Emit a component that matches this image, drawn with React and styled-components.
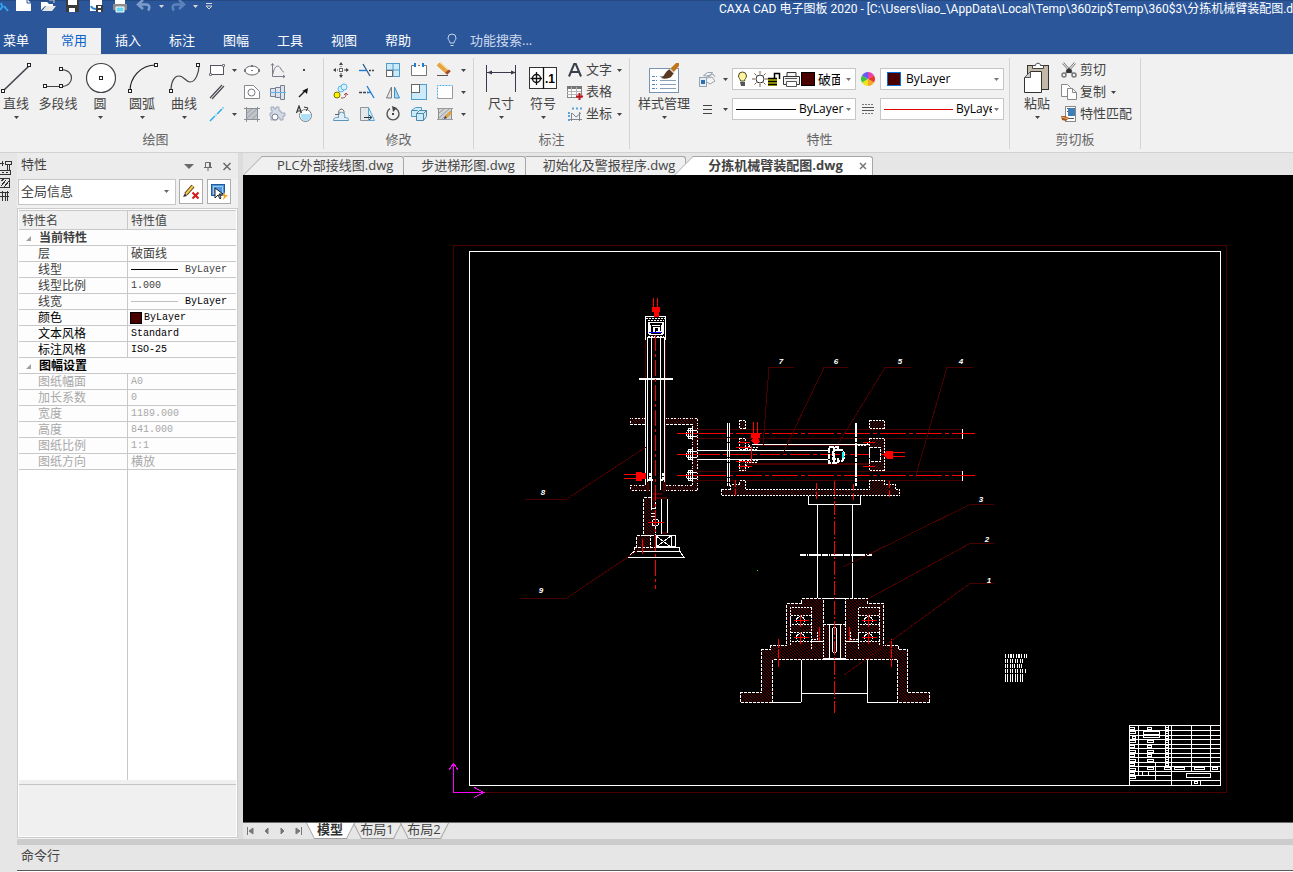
import React, { useState } from 'react'
import styled, { createGlobalStyle, css } from 'styled-components';

const GlobalStyle = createGlobalStyle`
  * {
    box-sizing: border-box;
  }

  body {
    margin: 0;
    overflow: hidden;
    background-color: #e6e6e6;
    color: #444444;
    font-family: 'Open Sans', 'Noto Sans CJK SC', sans-serif;
    font-size: 13px;
  }

  button, select, input {
    font: inherit;
    color: inherit;
    background: none;
    border: none;
    padding: 0;
    margin: 0;
  }

  svg {
    display: block;
    flex-shrink: 0;
  }
`;

const AppContainer = styled.div`
  height: 100vh;
  display: flex;
  flex-direction: column;
  overflow: hidden;
`;

const Svg = ({ w = 18, h = w, children, ...rest }) => (
  <svg width={w} height={h} viewBox={`0 0 ${w} ${h}`} fill="none" aria-hidden="true" {...rest}>{children}</svg>
);

const Caret = ({ color = '#444444' }) => (
  <Svg w={8} h={8}><path d="M2 3h5L4.500 6z" fill={color} /></Svg>
);

/* ---------- icons ---------- */

const Node = ({ x, y }) => <rect x={x - 1.5} y={y - 1.5} width="3" height="3" fill="#ffffff" stroke="#222222" />;

const bigIcons = {
  line: <Svg w={32} h={32}><path d="M3.500 28.500L29.500 3.500" stroke="#42424e" strokeWidth="1.600" /><Node x={3} y={29} /><Node x={29} y={3} /></Svg>,
  polyline: <Svg w={32} h={32}><path d="M3 24.500H19C33 24.500 33 7.500 19 7.500" stroke="#444444" strokeWidth="1.200" /><Node x={3} y={24} /><Node x={19} y={24} /><Node x={19} y={7} /></Svg>,
  circle: <Svg w={32} h={32}><circle cx="17" cy="16" r="14.500" fill="#ffffff" stroke="#42424a" strokeWidth="1.200" /><Node x={17} y={16} /></Svg>,
  arc: <Svg w={32} h={32}><path d="M4 29C4 16 14 3 30 3" stroke="#222222" strokeWidth="1.200" /><Node x={4} y={29} /><Node x={30} y={3} /></Svg>,
  curve: <Svg w={32} h={32}><path d="M3 29C3 20 6 14 11 14C16 14 18 20 22 20C28 20 31 10 31 3" stroke="#444444" strokeWidth="1.200" /><Node x={3} y={29} /><Node x={30} y={3} /></Svg>,
  dimension: <Svg w={32} h={32}><path d="M1.500 3V30M30.500 3V30M2 10.500H30" stroke="#3a3a4a" /><path d="M2 10.500l5-2v4zM31 10.500l-5-2v4z" fill="#3a3a4a" /></Svg>,
  symbol: (
    <Svg w={32} h={32}>
      <rect x="2.500" y="5.500" width="27" height="21" fill="#ffffff" stroke="#333333" />
      <path d="M16.500 5V27M9.500 10V23M3.500 16.500H15" stroke="#111111" strokeWidth="1.300" />
      <circle cx="9.500" cy="16.500" r="4" stroke="#111111" strokeWidth="1.400" />
      <text x="18" y="21" fontSize="12" fontWeight="700" fill="#000000" fontFamily="Liberation Sans, sans-serif">.1</text>
    </Svg>
  ),
  styles: (
    <Svg w={32} h={32}>
      <rect x="1.500" y="6.500" width="29" height="24" fill="#ffffff" stroke="#7795b0" />
      <path d="M4 14.500h5M4 18.500h5M4 22.500h5M4 26.500h5" stroke="#5887c9" strokeDasharray="3 1" />
      <path d="M12 14.500h4M12 18.500h16M12 22.500h16M12 26.500h16" stroke="#8aa0b4" />
      <path d="M22 7l6-6h3v3l-6 7z" fill="#c07820" />
      <path d="M22 7l4 4-3 4c-3 2-7 2-10 1 4-2 4-7 9-9z" fill="#5a3a22" />
      <path d="M22 7l4 4" stroke="#dddddd" strokeWidth="1.500" />
    </Svg>
  ),
  paste: (
    <Svg w={32} h={32}>
      <rect x="6.500" y="3.500" width="21" height="24" fill="#c4b8a6" stroke="#333333" />
      <path d="M11.500 6.500v-3h3c0-3 5-3 5 0h3v3z" fill="#ffffff" stroke="#444444" />
      <path d="M9.500 9.500h11v21h-17v-15z" fill="#ffffff" stroke="#333333" />
      <path d="M9.500 9.500v6h-6z" fill="#cccccc" stroke="#555555" />
    </Svg>
  ),
};

const icons = {
  rect: <Svg><rect x="2.500" y="4.500" width="13" height="9" fill="#ffffff" stroke="#55555f" /><path d="M1.500 12.500h2v2h-2zM14.500 3.500h2v2h-2z" fill="#ffffff" stroke="#77777f" /></Svg>,
  ellipse: <Svg><ellipse cx="9" cy="9.500" rx="7" ry="4.500" fill="#ffffff" stroke="#66666f" /><path d="M1 8h2v3H1zM15 8h2v3h-2zM8 4h2v2H8zM8 9h2v1H8z" fill="#77777f" /></Svg>,
  plotCurve: <Svg><path d="M3.500 3v12.500H16M2 4.500l1.500-2 1.500 2M14 14l2 1.500-2 1.500M4 13C5 6 9 2 12 8c1 2 2 3 3 3" stroke="#7d7d88" /></Svg>,
  dot: <Svg><rect x="8" y="8" width="2" height="2" fill="#444444" /></Svg>,
  parallel: <Svg><path d="M2 15L14 2M4 16L16 3" stroke="#4a4a55" strokeWidth="1.200" /></Svg>,
  polygon: <Svg><path d="M1.500 2.500h9l6 6v7h-15z" fill="#ffffff" stroke="#88888f" /><circle cx="8.500" cy="9.500" r="3.500" stroke="#77777f" /></Svg>,
  shaft: <Svg><path d="M1.500 5.500h5v-1h5v-2h4v14h-4v-2h-5v-1h-5z" fill="#dce3ec" stroke="#77808f" /><path d="M6.500 5v9M11.500 3v13" stroke="#77808f" /><path d="M1 9.500h16" stroke="#5ab4f0" /></Svg>,
  arrow: <Svg><path d="M4 14L11 7" stroke="#222222" strokeWidth="1.500" /><path d="M13 5l-1 6-2-2-3-1z" fill="#111111" /></Svg>,
  centerLine: <Svg><path d="M2 16L16 2" stroke="#25aae8" strokeWidth="1.400" strokeDasharray="7 1 1 1" /></Svg>,
  hatch: <Svg><rect x="3" y="3" width="12" height="12" fill="#c0c4c8" /><path d="M3 9l6-5M3 14L14 4M8 15l7-6" stroke="#9a9ea4" /><path d="M1 3.500h16M1 14.500h16M3.500 2v15M14.500 2v15" stroke="#8a8e96" /></Svg>,
  gear: <Svg><path d="M2 2h3v2h2V2h3v4h2v2h4v3h-2v4h-3v-2H8v2H2v-4H1V8h2V5H2z" fill="#d4dae6" stroke="#a0a9ba" /><circle cx="6" cy="12" r="3" fill="#ffffff" stroke="#77808f" /></Svg>,
  block: <Svg><circle cx="10.500" cy="10.500" r="6" fill="#ffffff" stroke="#777f8a" /><path d="M6 9h10c0 9-10 9-10 2z" fill="#aee0fa" /><path d="M1.500 8L4 1l2.500 7M2 6h4" stroke="#333333" strokeWidth="1.200" /><path d="M9 2l4 1-2 3" stroke="#333333" /></Svg>,
  move: <Svg><path d="M9 2v4M9 12v4M2 9h4M12 9h4" stroke="#444444" strokeDasharray="2 1" /><path d="M7 4l2-3 2 3zM7 14l2 3 2-3zM4 7L1 9l3 2zM14 7l3 2-3 2z" fill="#444444" /><rect x="7.500" y="7.500" width="3" height="3" fill="#ffffff" stroke="#666666" /></Svg>,
  trim: <Svg><path d="M1 9.500h7" stroke="#1c7cd6" strokeWidth="1.400" /><path d="M11 9.500h6" stroke="#444444" strokeWidth="1.400" strokeDasharray="2 1" /><path d="M5 3l7 12" stroke="#2c5c96" strokeWidth="1.300" /></Svg>,
  array: <Svg><rect x="2.500" y="2.500" width="13" height="13" fill="#cdeafa" stroke="#4f9cc8" /><path d="M9 2v14M2 9h14" stroke="#4f9cc8" /><rect x="2.500" y="9.500" width="6" height="6" fill="#ffffff" stroke="#666666" /></Svg>,
  fracture: <Svg><path d="M5 4.500H1.500v10h15v-10H13M8 4.500h2" fill="#ffffff" stroke="#777777" /><path d="M5 2v4M13 2v4" stroke="#1c7cd6" strokeWidth="2" /></Svg>,
  erase: <Svg><path d="M2 3l10 9" stroke="#e8a33d" strokeWidth="4" /><path d="M11 10l2 2" stroke="#9b4b32" strokeWidth="5" /><path d="M4 1l9 8" stroke="#fbd38a" /><path d="M1 14.500h11" stroke="#555555" /></Svg>,
  copyMove: <Svg><circle cx="5" cy="12" r="3" fill="#fff200" stroke="#777700" /><circle cx="9" cy="6" r="3" stroke="#59b4e8" fill="#d8f0fc" /><circle cx="12" cy="4" r="3" stroke="#59b4e8" fill="#d8f0fc" /><path d="M9 15c4 0 5-1 5-4M12 12l2-2 2 2" stroke="#9b4b4b" /></Svg>,
  extend: <Svg><path d="M1 9.500h9" stroke="#444444" strokeWidth="1.400" strokeDasharray="3 1" /><path d="M9 3l7 12" stroke="#1c7cd6" strokeWidth="1.300" /><path d="M9 9.500h4" stroke="#1c7cd6" strokeWidth="1.400" /></Svg>,
  mirror: <Svg><path d="M7.500 4v11h-5z" fill="#e8e8e8" stroke="#777777" /><path d="M10.500 4v11h5z" fill="#a9daf5" stroke="#3f8fbf" /></Svg>,
  scale: <Svg><rect x="1.500" y="1.500" width="15" height="15" fill="#cdeafa" stroke="#4f9cc8" /><rect x="1.500" y="1.500" width="8" height="8" fill="#ffffff" stroke="#666666" /></Svg>,
  stretch: <Svg><path d="M1.500 2.500h15v13h-15z" fill="#ffffff" stroke="#999999" /><path d="M1.500 15.500v-13h15" stroke="#ffffff" /><path d="M1.500 15.500v-13h15" stroke="#4aa8e0" strokeDasharray="2 1" /></Svg>,
  offset: <Svg><path d="M1.500 15.500h15c0-3-2-3-4-3 2-7-8-7-6 0-3 0-5 0-5 3z" stroke="#5c93b8" fill="#dceefa" /><path d="M3 9.500h4c-2-7 6-7 5-1" stroke="#666666" /></Svg>,
  chamfer: <Svg><path d="M2.500 2.500h8v13h-8z" fill="#e4e8ea" stroke="#8c96a0" /><path d="M10.500 2.500l6 13h-6z" fill="#d8f0fc" stroke="#5fa8d0" /><path d="M6 12.500h7M11 10l3 2.500-3 2.500" stroke="#333333" /></Svg>,
  rotate: <Svg><path d="M6 3.700A6 6 0 1 0 12 3.700" stroke="#555555" strokeWidth="1.400" /><path d="M8 1l5 2-4 4z" fill="#444444" /><rect x="8" y="8" width="2" height="2" fill="#444444" /></Svg>,
  explode: <Svg><path d="M1.500 5.500l4-3h6v6l-3 3h-7z" fill="#cdeafa" stroke="#4f9cc8" /><path d="M6.500 8.500l3-3h7v6l-3 4h-7z" fill="#cdeafa" stroke="#4f87a8" /><path d="M6.500 8.500h7v7M13.500 8.500l3-3M1.500 5.500h6" stroke="#4f87a8" /></Svg>,
  editHatch: <Svg><rect x="2.500" y="3.500" width="13" height="11" fill="#d0d3d6" stroke="#8c8c8c" /><path d="M3 8l5-4M3 13L13 4M5 15L15 6M1 3.500h16M1 14.500h16" stroke="#9a9a9a" /><path d="M10 12l5-5" stroke="#e0a040" strokeWidth="3" /><path d="M8 14l1-3 2 2z" fill="#333333" /></Svg>,
  text: <Svg><path d="M3 15.500L8.200 3h1.600L15 15.500M5 11h8" stroke="#3b3f4a" strokeWidth="2" /></Svg>,
  table: <Svg><rect x="1.500" y="3.500" width="14" height="11" fill="#ffffff" stroke="#888888" /><path d="M1 4.500h15" stroke="#777777" strokeWidth="3" /><path d="M1 8.500h14M1 11.500h14M5.500 4v10M10.500 4v10" stroke="#b4b4b4" /><path d="M13.500 10v7M10 13.500h7" stroke="#c4151c" strokeWidth="2" /></Svg>,
  coord: <Svg><path d="M5.500 16V8M4 14.500h12M13.500 16V7M6 8l4 4 5-4" stroke="#7c8590" /><path d="M6 3.500h2M10 3.500h2M14 3.500h2M3 7v2M3 10v2M3 14v2" stroke="#5aa4dc" strokeWidth="2" /></Svg>,
  layers: <Svg><path d="M5.500 5.500l4-3h5l-3 4zM4 9l10-2 3 4-5 3z" fill="#f4f4f4" stroke="#98a4b0" /><path d="M9 6l6-2 2 3" stroke="#98a4b0" /><rect x="1.500" y="7.500" width="7" height="9" fill="#e4edf6" stroke="#98a4b0" /><rect x="3" y="10" width="4" height="4" fill="#2e6fae" /></Svg>,
  lineWeights: <Svg><path d="M5 5.500h9M5 9.500h9M5 13.500h9" stroke="#444444" strokeWidth="1.200" /></Svg>,
  lineTypes: <Svg w={14} h={14}><path d="M1 2.500h12M1 11.500h12" stroke="#777777" strokeDasharray="2 1" /><path d="M1 5.500h12M1 8.500h12" stroke="#555555" /></Svg>,
  colors: (
    <Svg w={14} h={14}>
      <path d="M7 7L7 0A7 7 0 0 1 13 3.500z" fill="#e83fae" />
      <path d="M7 7L13 3.500A7 7 0 0 1 13 10.500z" fill="#e8372c" />
      <path d="M7 7L13 10.500A7 7 0 0 1 7 14z" fill="#f5a623" />
      <path d="M7 7V14A7 7 0 0 1 1 10.500z" fill="#efe21c" />
      <path d="M7 7L1 10.500A7 7 0 0 1 1 3.500z" fill="#3cc43c" />
      <path d="M7 7L1 3.500A7 7 0 0 1 7 0z" fill="#6a5af0" />
    </Svg>
  ),
  cut: <Svg><path d="M3 2l9 10M15 2L6 12" stroke="#777777" strokeWidth="2.500" /><path d="M3 2l8 9M15 2L7 11" stroke="#ffffff" /><path d="M6 9l3-2 3 2-1 3H7z" fill="#333333" /><circle cx="4" cy="14" r="2" stroke="#777777" strokeWidth="1.500" /><circle cx="14" cy="14" r="2" stroke="#777777" strokeWidth="1.500" /></Svg>,
  copy: <Svg><path d="M1.500 1.500h6l3 3v9h-9z" fill="#ffffff" stroke="#888888" /><path d="M7.500 5.500h5l4 4v7h-9z" fill="#ffffff" stroke="#888888" /><path d="M12.500 5.500v4h4" stroke="#888888" /></Svg>,
  match: <Svg><rect x="5.500" y="1.500" width="10" height="15" fill="#ffffff" stroke="#888888" /><rect x="8" y="3" width="7" height="8" fill="#3f7fb8" /><path d="M7 3.500h1M7 6.500h1M8 13.500h6" stroke="#555555" /><path d="M1 11l4 0 4 2-3 3-4-1z" fill="#a85a1c" /><path d="M2 12l6 2" stroke="#e8b070" /></Svg>,
};

/* ---------- title bar ---------- */

const TitleBar = styled.header`
  background-color: #2b579a;
  color: #ffffff;
`;

const TitleRow = styled.div`
  height: 28px;
  display: flex;
  align-items: flex-start;
  justify-content: space-between;
  border-top: 1px solid #254a83;
`;

const QuickAccess = styled.div`
  display: flex;
  align-items: center;
  flex-shrink: 0;
  height: 10px;
  width: 719px;

  button {
    width: 24px;
    height: 16px;
    display: flex;
    justify-content: center;
    align-items: center;
    flex-shrink: 0;
  }

  .narrow {
    width: 10px;
  }

  .logo {
    width: 12px;
    justify-content: flex-start;
  }

  button:last-child {
    margin-left: 4px;
  }
`;

const Title = styled.div`
  flex: 1;
  min-width: 0;
  font-family: Roboto, 'Noto Sans CJK SC', sans-serif;
  font-size: 12px;
  line-height: 16px;
  white-space: nowrap;
`;

const MenuTabs = styled.nav`
  display: flex;
  height: 26px;
  align-items: stretch;
`;

const MenuTab = styled.button`
  display: flex;
  justify-content: center;
  width: ${props => props.$first ? '47px' : '54px'};
  padding-right: ${props => props.$first ? '15px' : '0'};
  line-height: 24px;
  color: ${props => props.$active ? '#0a64c8' : '#ffffff'};
  background-color: ${props => props.$active ? '#f1f1f1' : 'transparent'};
  white-space: nowrap;
`;

const FeatureSearch = styled.label`
  display: flex;
  align-items: center;
  gap: 11px;
  padding: 0 0 2px 20px;
  color: #dfe8f5;

  input {
    width: 120px;
  }

  input::placeholder {
    color: #cddaee;
    opacity: 1;
  }
`;

const quickIcons = [
  { name: '应用', cls: 'logo', icon: <Svg w={12} h={16}><path d="M0 12l3-4M1 5l1 3M4 8l4 5" stroke="#35a4f4" strokeWidth="2" /></Svg> },
  { name: '新建', icon: <Svg w={18} h={16}><path d="M1 1h11l4 4v8H1z" fill="#ffffff" /><path d="M12 1v4h4" stroke="#2b579a" /></Svg> },
  { name: '打开', icon: <Svg w={18} h={16}><path d="M2 12V4h6l2 2h4v2H6z" fill="#ffffff" /><path d="M7 8h10l-4 5H3z" fill="#e6e6e6" /><path d="M10 2h5v3" stroke="#cccccc" /></Svg> },
  { name: '保存', icon: <Svg w={18} h={16}><path d="M3 1h13v13H3z" fill="#3b3b3b" /><path d="M5 1h9v6H5zM6 10h6v4H6z" fill="#ffffff" /></Svg> },
  { name: '另存为', icon: <Svg w={18} h={16}><path d="M3 1h12v12H3z" fill="#ffffff" /><path d="M4 8c1 3 3 3 5 3" stroke="#2b87d1" strokeWidth="2" /><path d="M9 7h7v7H9z" fill="#3b3b3b" /><path d="M11 8h3v2h-3zM11 12h3v2h-3z" fill="#ffffff" /></Svg> },
  { name: '打印', icon: <Svg w={18} h={16}><path d="M4 0h10v6H4z" fill="#ffffff" /><path d="M2 6h14v6H2z" fill="#8c8c8c" /><path d="M5 9h8v5H5z" fill="#64d7f4" stroke="#ffffff" /></Svg> },
  { name: '撤销', icon: <Svg w={16} h={16}><path d="M7 2L2 6.500 7 11M3 6.500h7c4 0 4 4 2 6" stroke="#7d9ccb" strokeWidth="2.500" /></Svg> },
  { name: '撤销列表', cls: 'narrow', icon: <Caret color="#d8d8d8" /> },
  { name: '恢复', icon: <Svg w={16} h={16}><path d="M9 2l5 4.500L9 11M13 6.500H6c-4 0-4 4-2 6" stroke="#5d82bb" strokeWidth="2.500" /></Svg> },
  { name: '恢复列表', cls: 'narrow', icon: <Caret color="#d8d8d8" /> },
  { name: '自定义', cls: 'narrow', icon: <Svg w={8} h={12}><path d="M1 3.500h6" stroke="#d8d8d8" /><path d="M1 6h6L4 9z" stroke="#d8d8d8" /></Svg> },
];

const menuTabs = ['菜单', '常用', '插入', '标注', '图幅', '工具', '视图', '帮助'];

const Header = () => {

  const [activeTab, setActiveTab] = useState('常用');

  return (
    <TitleBar>
      <TitleRow>
        <QuickAccess>
          {quickIcons.map(item => <button key={item.name} className={item.cls} aria-label={item.name}>{item.icon}</button>)}
        </QuickAccess>
        <Title>CAXA CAD 电子图板 2020 - [C:\Users\liao_\AppData\Local\Temp\360zip$Temp\360$3\分拣机械臂装配图.dwg]</Title>
      </TitleRow>
      <MenuTabs>
        {menuTabs.map((name, index) => (
          <MenuTab key={name} $first={index === 0} $active={name === activeTab} onClick={() => setActiveTab(name)}>{name}</MenuTab>
        ))}
        <FeatureSearch>
          <Svg w={14} h={14}><path d="M5 10c0-2-2-3-2-5a4 4 0 0 1 8 0c0 2-2 3-2 5zM5.500 12.500h3" stroke="#c8d6ec" /></Svg>
          <input placeholder="功能搜索..." aria-label="功能搜索" />
        </FeatureSearch>
      </MenuTabs>
    </TitleBar>
  );
};

/* ---------- ribbon ---------- */

const RibbonContainer = styled.div`
  display: flex;
  flex-shrink: 0;
  padding: 3px 0;
  background-color: #f1f1f1;
  border-top: 1px solid #e1e1e1;
  border-bottom: 1px solid #d2d2d2;
  overflow: hidden;
`;

const Group = styled.section`
  display: flex;
  flex-direction: column;
  flex-shrink: 0;
  width: ${props => props.$width}px;
  padding: 1px 0;
  border-right: 1px solid #d4d4d4;

  &:first-child {
    margin-left: -12px;
  }
`;

const GroupContent = styled.div`
  display: flex;
  height: 66px;
  padding-left: ${props => props.$indent}px;
`;

const GroupLabel = styled.div`
  margin-top: 5px;
  line-height: 18px;
  text-align: center;
  color: #666666;
`;

const BigButtonBox = styled.button`
  width: ${props => props.$width || 42}px;
  flex-shrink: 0;
  display: flex;
  flex-direction: column;
  align-items: center;
  padding-top: 3px;
  line-height: 18px;
  white-space: nowrap;

  svg:last-child {
    margin-top: 1px;
  }
`;

const BigButton = ({ label, icon, width, caret = true }) => (
  <BigButtonBox $width={width}>
    {bigIcons[icon]}
    <span>{label}</span>
    {caret && <Caret />}
  </BigButtonBox>
);

const IconGrid = styled.div`
  display: grid;
  grid-template-columns: ${props => props.$columns};
  grid-auto-rows: 22px;
`;

const IconButton = styled.button`
  display: flex;
  align-items: center;
  justify-content: center;
`;

const TextButton = styled.button`
  height: 22px;
  display: flex;
  align-items: center;
  gap: 2px;
  line-height: 20px;
  white-space: nowrap;

  span {
    height: 22px;
  }

  svg:last-child {
    margin-left: 1px;
  }
`;

const Stack = styled.div`
  display: flex;
  flex-direction: column;
  padding-left: ${props => props.$indent || 0}px;
`;

const PropertyGrid = styled.div`
  display: grid;
  grid-template-columns: 22px 14px 124px 24px 124px;
  grid-auto-rows: 30px;
  align-items: center;
  justify-items: center;
  padding-top: 5px;
`;

const Combo = styled.div`
  width: 100%;
  height: 22px;
  display: flex;
  align-items: center;
  padding: 0 3px;
  background-color: #ffffff;
  border: 1px solid #c6c6c6;
  color: #000000;

  select {
    flex: 1;
    min-width: 0;
    height: 18px;
    margin-right: ${props => props.$small ? '0' : '4px'};
    line-height: 18px;
    appearance: none;
    outline: none;
    overflow: hidden;
    font-size: ${props => props.$small ? '12px' : '13px'};
  }
`;

const Swatch = styled.span`
  width: 14px;
  height: 14px;
  flex-shrink: 0;
  background-color: #4b0000;
  border: 1px solid ${props => props.$border || '#000000'};
  margin-left: ${props => props.$before || 0}px;
  margin-right: ${props => props.$gap || 0}px;
`;

const LineSample = styled.span`
  width: ${props => props.$width}px;
  flex-shrink: 0;
  margin-right: 3px;
  border-top: 1px solid ${props => props.$color};
`;

const layerIcons = (
  <Svg w={65} h={18}>
    <path d="M4.500 11c0-2-2-3-2-5a4 4 0 0 1 8 0c0 2-2 3-2 5z" fill="#fff3a0" stroke="#4a4a20" /><path d="M4 12h5v4H5z" fill="#555555" />
    <circle cx="24" cy="9" r="4" fill="#ffffff" stroke="#333333" />
    <path d="M24 1v3M24 14v3M16 9h3M29 9h3M18.500 3.500l2 2M27.500 12.500l2 2M29.500 3.500l-2 2M20.500 12.500l-2 2" stroke="#7a5a3a" />
    <path d="M32 8h9v8h-9z" fill="#b8b800" /><path d="M32 8.500h9M32 11.500h9M32 14.500h9M38.500 8V3.500h5V9" stroke="#000000" strokeWidth="1.500" />
    <path d="M51 6V2.500h9V6M47.500 6.500h16v8h-16z" fill="#f4f4f4" stroke="#333333" /><path d="M50.500 11.500h10v5h-10zM49 8.500h12" fill="#ffffff" stroke="#555555" />
  </Svg>
);

const drawTools = ['rect', 'caret', 'ellipse', 'plotCurve', 'dot', 'parallel', null, 'polygon', 'shaft', 'arrow', 'centerLine', 'caret', 'hatch', 'gear', 'block'];
const editTools = ['move', 'trim', 'array', 'fracture', 'erase', 'caret', 'copyMove', 'extend', 'mirror', 'scale', 'stretch', 'caret', 'offset', 'chamfer', 'rotate', 'explode', 'editHatch', 'caret'];

const ToolGrid = ({ tools, columns }) => (
  <IconGrid $columns={columns}>
    {tools.map((tool, index) => tool
      ? <IconButton key={index} aria-label={tool}>{tool === 'caret' ? <Caret /> : icons[tool]}</IconButton>
      : <span key={index} />)}
  </IconGrid>
);

const Ribbon = () => (
  <RibbonContainer>
    <Group $width={336}>
      <GroupContent $indent={7}>
        <BigButton label="直线" icon="line" />
        <BigButton label="多段线" icon="polyline" caret={false} />
        <BigButton label="圆" icon="circle" />
        <BigButton label="圆弧" icon="arc" />
        <BigButton label="曲线" icon="curve" />
        <ToolGrid tools={drawTools} columns="24px 10px 26px 26px 26px" />
      </GroupContent>
      <GroupLabel>绘图</GroupLabel>
    </Group>
    <Group $width={150}>
      <GroupContent $indent={4}>
        <ToolGrid tools={editTools} columns="repeat(5, 26px) 10px" />
      </GroupContent>
      <GroupLabel>修改</GroupLabel>
    </Group>
    <Group $width={156}>
      <GroupContent $indent={6}>
        <BigButton label="尺寸" icon="dimension" />
        <BigButton label="符号" icon="symbol" />
        <Stack $indent={2}>
          <TextButton>{icons.text}<span>文字</span><Caret /></TextButton>
          <TextButton>{icons.table}<span>表格</span></TextButton>
          <TextButton>{icons.coord}<span>坐标</span><Caret /></TextButton>
        </Stack>
      </GroupContent>
      <GroupLabel>标注</GroupLabel>
    </Group>
    <Group $width={380}>
      <GroupContent $indent={2}>
        <BigButton label="样式管理" icon="styles" width={64} />
        <PropertyGrid>
          <IconButton aria-label="图层">{icons.layers}</IconButton>
          <IconButton aria-label="图层列表"><Caret /></IconButton>
          <Combo>
            {layerIcons}
            <Swatch $gap={3} />
            <select aria-label="当前图层"><option>破面线</option></select>
            <Caret color="#777777" />
          </Combo>
          {icons.colors}
          <Combo $small>
            <Swatch $border="#0a6fd8" $before={3} $gap={5} />
            <select aria-label="颜色"><option>ByLayer</option></select>
            <Caret color="#777777" />
          </Combo>
          <IconButton aria-label="线宽设置">{icons.lineWeights}</IconButton>
          <IconButton aria-label="线宽列表"><Caret /></IconButton>
          <Combo $small>
            <LineSample $width={60} $color="#000000" />
            <select aria-label="线宽"><option>ByLayer</option></select>
            <Caret color="#777777" />
          </Combo>
          {icons.lineTypes}
          <Combo $small>
            <LineSample $width={69} $color="#e00000" />
            <select aria-label="线型"><option>ByLayer</option></select>
            <Caret color="#777777" />
          </Combo>
        </PropertyGrid>
      </GroupContent>
      <GroupLabel>特性</GroupLabel>
    </Group>
    <Group $width={131}>
      <GroupContent $indent={6}>
        <BigButton label="粘贴" icon="paste" />
        <Stack $indent={2}>
          <TextButton>{icons.cut}<span>剪切</span></TextButton>
          <TextButton>{icons.copy}<span>复制</span><Caret /></TextButton>
          <TextButton>{icons.match}<span>特性匹配</span></TextButton>
        </Stack>
      </GroupContent>
      <GroupLabel>剪切板</GroupLabel>
    </Group>
  </RibbonContainer>
);

/* ---------- property panel ---------- */

const Workspace = styled.main`
  flex: 1;
  min-height: 0;
  display: flex;
`;

const SideStrip = styled.div`
  width: 17px;
  flex-shrink: 0;
  padding-top: 6px;
`;

const Panel = styled.aside`
  width: 221px;
  flex-shrink: 0;
  display: flex;
  flex-direction: column;
  background-color: #f0f0f0;
`;

const Splitter = styled.div`
  width: 5px;
  flex-shrink: 0;
  background-color: #dcdcdc;
`;

const PanelTitle = styled.div`
  height: 26px;
  display: flex;
  align-items: center;
  padding: 0 2px 5px 4px;
  background-color: #ececec;

  span {
    flex: 1;
  }

  button {
    width: 19px;
    height: 16px;
    display: flex;
    align-items: flex-end;
    justify-content: center;
  }
`;

const PanelTools = styled.div`
  display: flex;
  gap: 3px;
  padding: 0 7px 3px 1px;

  button {
    width: 24px;
    height: 25px;
    flex-shrink: 0;
    display: flex;
    align-items: center;
    justify-content: center;
    background-color: #ffffff;
    border: 1px solid #acacac;
  }

  button:last-child {
    margin-left: 1px;
  }
`;

const ScopeCombo = styled(Combo)`
  flex: 1;
  width: auto;
  height: 26px;
  padding: 0 5px 2px 2px;
  color: #444444;
`;

const PropertyBox = styled.div`
  flex: 1;
  min-height: 0;
  margin: 0 0 1px;
  padding: 1px;
  display: flex;
  flex-direction: column;
  background-color: #ffffff;
  border: 1px solid #cccccc;
  font-family: 'Noto Sans CJK SC', sans-serif;
  font-size: 12px;
`;

const PropertyTable = styled.table`
  width: 100%;
  table-layout: fixed;
  border-spacing: 0;
  background-color: #fdfdfd;

  col:first-child {
    width: 109px;
  }

  th {
    height: 20px;
    padding: 0 3px;
    line-height: 17px;
    font-weight: 400;
    text-align: left;
    vertical-align: top;
    background-color: #f0f0f0;
    border: 1px solid #c8c8c8;
    border-width: 1px 1px 1px 0;
  }

  th:last-child {
    border-right: none;
  }
`;

const toneColors = { gray: '#404040', black: '#000000', disabled: '#a8a8a8' };

const PropertyRow = styled.tr`
  color: ${props => toneColors[props.$tone]};

  td {
    height: 16px;
    padding: 0 3px;
    line-height: 13px;
    vertical-align: top;
    border-bottom: 1px solid #c8c8c8;
    white-space: nowrap;
  }

  td:first-child:not([colspan]) {
    padding-left: 19px;
    border-right: 1px solid #c8c8c8;
  }
`;

const GroupCell = styled.td`
  font-weight: 700;

  div {
    display: flex;
    align-items: center;
    gap: 7px;
  }
`;

const Value = styled.div`
  height: 13px;
  display: flex;
  align-items: center;
  gap: 4px;
  ${props => props.$latin && css`
    height: 15px;
    font-family: 'Liberation Mono', monospace;
    font-size: 10px;
  `}
  ${props => props.$dark && css`
    color: #000000;
  `}

  ${Swatch} {
    width: 12px;
    height: 12px;
    margin: 0 -2px 0 -1px;
  }
`;

const PropertyFiller = styled.div`
  flex: 1;
  width: 109px;
  border-right: 1px solid #c8c8c8;
`;

const PropertyHint = styled.div`
  height: 56px;
  flex-shrink: 0;
  background-color: #f0f0f0;
  padding-top: 4px;

  &::before {
    content: '';
    display: block;
    border-top: 1px solid #c4c4c4;
  }
`;

const properties = [
  { group: '当前特性', tone: 'gray' },
  { name: '层', value: '破面线', tone: 'gray' },
  { name: '线型', value: 'ByLayer', latin: true, line: '#000000', tone: 'gray' },
  { name: '线型比例', value: '1.000', latin: true, tone: 'gray' },
  { name: '线宽', value: 'ByLayer', latin: true, line: '#c0c0c0', tone: 'gray', dark: true },
  { name: '颜色', value: 'ByLayer', latin: true, swatch: true, tone: 'black' },
  { name: '文本风格', value: 'Standard', latin: true, tone: 'black' },
  { name: '标注风格', value: 'ISO-25', latin: true, tone: 'black' },
  { group: '图幅设置', tone: 'black' },
  { name: '图纸幅面', value: 'A0', latin: true, tone: 'disabled' },
  { name: '加长系数', value: '0', latin: true, tone: 'disabled' },
  { name: '宽度', value: '1189.000', latin: true, tone: 'disabled' },
  { name: '高度', value: '841.000', latin: true, tone: 'disabled' },
  { name: '图纸比例', value: '1:1', latin: true, tone: 'disabled' },
  { name: '图纸方向', value: '横放', tone: 'disabled' },
];

const PropertyPanel = () => (
  <Panel>
    <PanelTitle>
      <span>特性</span>
      <button aria-label="窗口位置"><Svg w={12} h={12}><path d="M1 4h10L6 9z" fill="#6a6a6a" /></Svg></button>
      <button aria-label="固定"><Svg w={10} h={12}><path d="M2.500 2.500h5v5h-5zM6.500 2v6M1 7.500h8M5 8v3" stroke="#6a6a6a" /></Svg></button>
      <button aria-label="关闭"><Svg w={10} h={12}><path d="M1.500 3l7 7M8.500 3l-7 7" stroke="#6a6a6a" strokeWidth="1.500" /></Svg></button>
    </PanelTitle>
    <PanelTools>
      <ScopeCombo>
        <select aria-label="选择范围"><option>全局信息</option></select>
        <Caret color="#666666" />
      </ScopeCombo>
      <button aria-label="清除选择"><Svg><path d="M4 11L11 3" stroke="#5a3a22" strokeWidth="4" /><path d="M4 11L11 3" stroke="#f5c94c" strokeWidth="2" /><path d="M1 14l2-4 2 3z" fill="#333333" /><path d="M10.500 9.500l6 6M16.500 9.500l-6 6" stroke="#d01818" strokeWidth="2" /></Svg></button>
      <button aria-label="快速选择"><Svg><rect x="1.500" y="1.500" width="13" height="11" fill="#4f96dc" stroke="#1f5c9c" /><rect x="3.500" y="3.500" width="9" height="7" stroke="#9cc8f2" /><path d="M5 5v10l3-3 2 4 1-1-2-4h4z" fill="#ffffff" stroke="#222222" /><path d="M15 9l-3 4h2l-1 4 5-5h-3z" fill="#f5a623" /></Svg></button>
    </PanelTools>
    <PropertyBox>
      <PropertyTable>
        <colgroup><col /><col /></colgroup>
        <thead>
          <tr><th>特性名</th><th>特性值</th></tr>
        </thead>
        <tbody>
          {properties.map(item => item.group ? (
            <PropertyRow key={item.group} $tone={item.tone}>
              <GroupCell colSpan={2}>
                <div><Svg w={10} h={10}><path d="M9 4v5H4z" fill="#a0a0a0" /></Svg>{item.group}</div>
              </GroupCell>
            </PropertyRow>
          ) : (
            <PropertyRow key={item.name} $tone={item.tone}>
              <td>{item.name}</td>
              <td>
                <Value $latin={item.latin} $dark={item.dark}>
                  {item.line && <LineSample $width={47} $color={item.line} />}
                  {item.swatch && <Swatch />}
                  {item.value}
                </Value>
              </td>
            </PropertyRow>
          ))}
        </tbody>
      </PropertyTable>
      <PropertyFiller />
      <PropertyHint />
    </PropertyBox>
  </Panel>
);

/* ---------- document area ---------- */

const DocumentArea = styled.div`
  flex: 1;
  min-width: 0;
  display: flex;
  flex-direction: column;
`;

const FileTabs = styled.div`
  height: 22px;
  flex-shrink: 0;
  display: flex;
  align-items: flex-end;
`;

const FileTab = styled.button`
  position: relative;
  z-index: 0;
  height: 19px;
  display: flex;
  align-items: center;
  gap: 13px;
  padding-left: ${props => props.$slanted ? '34px' : '17px'};
  padding-right: ${props => props.$active ? '5px' : '11px'};
  padding-bottom: 1px;
  margin-left: ${props => props.$active ? '-12px' : '0'};
  line-height: 17px;
  font-weight: ${props => props.$active ? 700 : 400};
  white-space: nowrap;

  svg {
    margin: 2px 0 0 2px;
  }

  &::before, &::after {
    content: '';
    position: absolute;
    z-index: -1;
    top: 0;
    bottom: 0;
    border-top: 1px solid #a6a6a6;
    background-color: ${props => props.$active ? '#ffffff' : '#f0f0f0'};
  }

  &::before {
    left: 0;
    width: 50%;
    border-left: 1px solid #a6a6a6;
    transform-origin: bottom left;
    transform: ${props => props.$slanted ? 'skewX(-45deg)' : 'none'};
    border-left-width: ${props => props.$slanted ? '1px' : '0'};
  }

  &::after {
    left: ${props => props.$slanted ? '30px' : '0'};
    right: 0;
    border-right: 1px solid #a6a6a6;
    border-top-right-radius: 3px;
  }
`;

const Canvas = styled.div`
  flex: 1;
  min-height: 0;
  background-color: #000000;

  svg {
    width: 100%;
    height: 100%;
  }
`;

const LayoutBar = styled.div`
  height: 17px;
  flex-shrink: 0;
  display: flex;
  border-top: 1px solid #6a6a6a;
`;

const LayoutNav = styled.div`
  display: flex;
  flex-shrink: 0;
  width: 63px;

  button {
    width: 16px;
    display: flex;
    align-items: center;
    justify-content: center;
  }
`;

const LayoutTab = styled.button`
  position: relative;
  z-index: ${props => props.$active ? 1 : 0};
  width: 49px;
  height: 16px;
  margin-right: -2px;
  line-height: 12px;
  padding: 0 1px 4px 0;
  font-weight: ${props => props.$active ? 700 : 400};
  color: ${props => props.$active ? '#333333' : '#444444'};

  &::before, &::after {
    content: '';
    position: absolute;
    z-index: -1;
    top: 0;
    bottom: 0;
    border-bottom: 1px solid #a0a0a0;
    background-color: ${props => props.$active ? '#ffffff' : '#eaeaea'};
  }

  &::before {
    left: 0;
    right: 24px;
    border-left: 1px solid #a0a0a0;
    transform-origin: top left;
    transform: skewX(27deg);
  }

  &::after {
    left: 16px;
    right: 0;
    border-right: 1px solid #a0a0a0;
    transform-origin: top right;
    transform: skewX(-27deg);
  }
`;

const DARK = '#4b0000';
const RED = '#ff0000';

const Leader = ({ points, n, x, y }) => (
  <g>
    <polyline points={points} stroke={DARK} />
    <text x={x} y={y} textAnchor="middle" fill="#ffffff" fontSize="8" fontStyle="italic" fontWeight="700" fontFamily="Liberation Sans, sans-serif">{n}</text>
  </g>
);

const Bearing = ({ x, y }) => (
  <g>
    <rect x={x - 10} y={y - 5} width="21" height="9" fill="#000000" stroke="#ffffff" strokeDasharray="2 1" />
    <circle cx={x} cy={y} r="4" stroke="#ffffff" />
    <path d={`M${x - 7} ${y}h15M${x} ${y - 6}v12`} stroke={RED} />
  </g>
);

const Bolt = ({ y }) => (
  <g stroke="#ffffff">
    <path d={`M686.500 ${y - 2}v4M688.500 ${y - 5}h4v10h-4zM690.500 ${y - 5}v10M692.500 ${y - 6}v12M687 ${y - 3}h10M687 ${y + 3}h10`} />
    <path d={`M677 ${y}h43`} stroke={RED} strokeDasharray="14 2 4 2" />
  </g>
);

// parts list in the lower right corner of the sheet
const TitleBlock = () => (
  <g stroke="#ffffff">
    <rect x="1129.500" y="725.500" width="91" height="60" />
    {[730, 735, 739, 744, 748, 753, 757, 762, 766, 771].map(y => <path key={y} d={`M1129 ${y}.5h91`} />)}
    <path d="M1138.500 725v50M1165.500 725v41M1168.500 725v41M1171.500 725v60M1191.500 725v46M1210.500 725v46M1129 775.500h42M1129 780.500h91M1155.500 763v17M1191.500 780v5M1200.500 780v5M1142.500 771v4M1148.500 771v4" />
    {[727, 731, 736, 740, 745, 750, 754, 759, 763, 768, 772, 776].map((y, i) => <rect key={y} x={i === 2 ? 1132.5 : 1129.5} y={y + 0.5} width={i === 2 ? 3 : 5 + i % 2} height="2" />)}
    {[727, 740, 745, 750, 754, 759].map((y, i) => <rect key={y} x="1147.500" y={y + 0.5} width={i % 2 ? 6 : 4} height="2" />)}
    {[727, 731, 736, 740, 745, 750, 754, 759, 763].map(y => <rect key={y} x="1165.500" y={y + 0.5} width="3" height="2" />)}
    <path d="M1143.500 731.500h16v3h-16zM1143.500 735.500h16v2h-16zM1147.500 767.500h6v2h-6zM1164.500 767.500h6v2h-6zM1174.500 767.500h10v2h-10zM1194.500 767.500h10v2h-10zM1212.500 767.500h5v2h-5zM1186.500 773.500h24v4h-24zM1194.500 781.500h3v2h-3z" />
  </g>
);

const Drawing = () => (
  <svg viewBox="243 175 1050 647" fill="none" shapeRendering="crispEdges" role="img" aria-label="分拣机械臂装配图">
    <defs>
      <pattern id="hatch" width="3" height="3" patternUnits="userSpaceOnUse">
        <path d="M0 0l3 3" stroke="#5a0000" shapeRendering="auto" />
      </pattern>
      <pattern id="hatchBack" width="3" height="3" patternUnits="userSpaceOnUse">
        <path d="M3 0l-3 3" stroke="#5a0000" shapeRendering="auto" />
      </pattern>
    </defs>

    <rect x="453.500" y="245.500" width="773" height="547" stroke="#4b0000" />
    <rect x="469.500" y="251.500" width="751" height="534" stroke="#ffffff" />
    <path d="M453.500 793V763M448.500 770.500l5-7 5 7M453 792.500h31M474.500 787.500l9 5-9 5" stroke="#ff00ff" />

    {/* gripper arm */}
    <path d="M645.500 340v60M665.500 340v150" stroke={DARK} />
    <g stroke="#ffffff">
      <path d="M645.500 316v24M665.500 316v24M645 316.500h21M645.500 380v105M647.500 338v147M651.500 338v152M660.500 338v152M664.500 338v147M647 337.500h19" />
      <path d="M649.500 322.500h13v12h-13zM650.500 325v9M661.500 325v9M652 325.500h8M648.500 322v12M663.500 322v12" />
      <path d="M646 318.500h20M648 320.500h16M648 336.500h16M653 331.500h8" strokeDasharray="2 1" />
      <path d="M654.500 327.500h4v5h-4zM653.500 327v6M659.500 327v6" />
      <path d="M639 379h34" strokeWidth="2" />
    </g>
    <path d="M649 332.500h13" stroke="#0000ff" />
    <path d="M653.500 298v10M657.500 298v10M624 474.500h12M624 478.500h12" stroke={RED} />
    <path d="M652 307h8v5h-1v5h-5v-5h-2zM636 472h6v1h4v6h-4v2h-6z" fill={RED} />
    <g fill="url(#hatch)" stroke="#ffffff" strokeDasharray="3 1">
      <path d="M645 418.500h-14.500v6H645M666 418.500h31.500v72H666M666 424.500h26.500v61H666M645 485.500h-14.500v5H650" fill="none" />
      <path d="M630 418h15v6h-15zM666 418h32v6h-32zM692 424h6v61h-6zM666 485h32v6h-32zM630 485h18v6h-18z" stroke="none" />
      <path d="M643.500 497.500h12v38h-12zM636.500 535.500h14v12h-14zM634 547.500h21v4h-21z" />
    </g>
    <path d="M650 473v8M663 473v8M648 480h5M660 480h5" stroke="#ffffff" strokeWidth="2" strokeDasharray="3 1" />
    <path d="M648 482v10M664 482v10M651 493.500h11M651 497.500h16M661 532.500h6" stroke={DARK} strokeWidth="2" />
    <path d="M651.500 490v20M661.500 499v35M667.500 499v34M651 508.500h4M651 513.500h4M651 516.500h4M656 535.500h19v11h-19zM671.500 536v11M656 536l15 11M671 536l-15 11M655 547.500h24.500v4H655M634 551.500l-6 6h56l-4-6z" stroke="#ffffff" />
    <circle cx="655.500" cy="522.500" r="3.500" stroke="#ffffff" />
    <path d="M648 522.500h16M642.500 539v15" stroke={RED} />
    <path d="M655.500 335v254" stroke={RED} strokeDasharray="16 3 3 3" />

    {/* guide rods and horizontal cylinder */}
    <path d="M697 429.500h265M697 438.500h265M697 471.500h265M697 480.500h265M757 445.500h112M746 463.500h123M746 464.500h123" stroke={DARK} />
    <path d="M697 450.500h131M697 459.500h131M752 444.500h117M962.500 429v10M962.500 471v10" stroke="#ffffff" />
    <Bolt y={433.5} />
    <Bolt y={454.5} />
    <Bolt y={475.5} />
    <path d="M700 433.500h275M700 475.500h275" stroke={RED} strokeDasharray="26 3 4 3" />
    <path d="M700 454.500h190" stroke={RED} strokeDasharray="20 3 4 3" />
    <g fill="url(#hatchBack)" stroke="#ffffff" strokeDasharray="2 1">
      <path d="M739.500 420.500h6v8h-6zM739.500 438.500h6v11h-6zM739.500 460.500h6v10h-6zM869.500 420.500h15v8h-15zM869.500 438.500h15v32h-15z" />
      <path d="M721.500 489.500h9v-5h9v-4h6v9h124v-9h15v4h11v5h4v6h-178z" />
    </g>
    <rect x="869.500" y="447.500" width="11" height="14" fill="#000000" stroke="#ffffff" strokeDasharray="3 1" />
    <path d="M727.500 423v63M729.500 423v63" stroke="#ffffff" strokeDasharray="14 1 4 1" />
    <path d="M856 423v63" stroke="#ffffff" strokeWidth="2" strokeDasharray="14 1 4 1" />
    <path d="M746 442l4 4-4 3M747 447h10v2h-10zM747 460h10v2h-10zM746 465l3 3M858 445h8l4-4" stroke="#ffffff" strokeDasharray="2 1" />
    <path d="M751.500 446v17" stroke={RED} />
    <path d="M829 447h9v3h-5v9h5v4h-9zM834 447v16M838 450h4l2 3v5l-2 3h-4" stroke="#ffffff" strokeWidth="2" strokeDasharray="5 1" />
    <path d="M842.500 452v6" stroke="#00ffff" strokeWidth="2" />
    <path d="M753.500 422v13M757.500 422v13M892 452.500h13M892 456.500h13M738 442.500h12M736 447.500h14M736 461.500h14M738 466.500h14M863 442.500h12M863 466.500h12M883 454.500h5" stroke={RED} />
    <path d="M751 434h9v4h-2l2 4-3 2h-3l-3-3 2-3h-2zM884 453l3-2h6v8h-6l-3-3z" fill={RED} />
    <path d="M735.500 480v18M816.500 483v18M853.500 484v17M889.500 481v18" stroke={RED} strokeDasharray="7 2" />

    {/* column */}
    <path d="M808.500 496v8h52v-8M817.500 504v94M852.500 504v94" stroke="#ffffff" />
    <path d="M800 555h72" stroke="#ffffff" strokeWidth="2" strokeDasharray="6 1 1 1 12 1" />

    {/* base housing */}
    <path d="M801.500 598.500H867.500V603.500H883.500V645.500H898.500V649.500H907.500V692.500H929.500V702.500H897.500V659.500H772.500V702.500H740.500V692.500H761.500V649.500H770.500V645.500H786.500V603.500H801.500Z" fill="url(#hatch)" stroke="#ffffff" strokeDasharray="3 1" />
    <path d="M790.500 645v-38h21v42M879.500 645v-38h-21v42M817.500 632v7h-8M850.500 632v7h8" stroke="#ffffff" strokeDasharray="2 1" />
    <rect x="823.500" y="598.500" width="22" height="26" fill="#000000" stroke="#ffffff" strokeDasharray="3 1" />
    <path d="M823 598.500h23M811 641.500h12M846 641.500h12M801.500 660v42M867.500 660v42M801 693.500h66M772 702.500h29M867 702.500h30" stroke="#ffffff" />
    <path d="M823.500 625v34M845.500 625v34" stroke="#ffffff" strokeDasharray="2 1" />
    <rect x="829.500" y="624.500" width="11" height="34" fill="#000000" stroke="#ffffff" />
    <rect x="832.500" y="627.500" width="4" height="25" rx="2" stroke="#ffffff" />
    <path d="M823 659h23" stroke="#ffffff" strokeWidth="2" />
    <Bearing x={800.5} y={620.5} />
    <Bearing x={800.5} y={637.5} />
    <Bearing x={868.5} y={620.5} />
    <Bearing x={868.5} y={637.5} />
    <path d="M778.500 639v28M891.500 639v28M819.500 627v14M849.500 627v14" stroke={RED} strokeDasharray="9 1" />
    <path d="M834.500 481v232" stroke={RED} strokeDasharray="14 2 2 2" />

    <Leader n="7" x={781} y={364} points="794,367.5 769,367.500 763,445" />
    <Leader n="6" x={836} y={364} points="848,367.5 824,367.500 783,453" />
    <Leader n="5" x={900} y={364} points="911,367.5 885,367.500 838,444" />
    <Leader n="4" x={961} y={364} points="973,367.5 947,367.500 916,475" />
    <Leader n="3" x={981} y={502} points="994,504.5 970,504.500 843,567" />
    <Leader n="2" x={987} y={542} points="994,543.5 970,543.500 866,600" />
    <Leader n="1" x={989} y={583} points="994,583.5 970,583.500 844,675" />
    <Leader n="8" x={543} y={495} points="525,499.5 566,499.500 646,447" />
    <Leader n="9" x={541} y={593} points="520,598.5 566,598.500 640,549" />
    <rect x="757" y="570" width="1" height="1" fill="#00ff00" />

    {/* technical notes, too small to resolve at this zoom */}
    <g stroke="#ffffff">
      <path d="M1005 656h22" strokeWidth="4" strokeDasharray="1 2 1 1 2 1" />
      <path d="M1005 661h20" strokeWidth="4" strokeDasharray="1 1 1 2" />
      <path d="M1005 666h18" strokeWidth="4" strokeDasharray="1 1 1 2 1 1" />
      <path d="M1005 671h22" strokeWidth="4" strokeDasharray="1 1 1 2" />
      <path d="M1005 678h20" strokeWidth="8" strokeDasharray="1 1 1 2" />
    </g>
    <TitleBlock />
  </svg>
);

const files = ['PLC外部接线图.dwg', '步进梯形图.dwg', '初始化及警报程序.dwg', '分拣机械臂装配图.dwg'];
const layouts = ['模型', '布局1', '布局2'];
const navPaths = [
  { name: '第一页', d: 'M1.500 1v8M7 2L3 5l4 3z' },
  { name: '上一页', d: 'M6 2L3 5l3 3z' },
  { name: '下一页', d: 'M4 2l3 3-3 3z' },
  { name: '最后一页', d: 'M8.500 1v8M3 2l4 3-4 3z' },
];

const Documents = () => {

  const [activeFile, setActiveFile] = useState(3);
  const [activeLayout, setActiveLayout] = useState(0);

  return (
    <DocumentArea>
      <FileTabs>
        {files.map((name, index) => (
          <FileTab key={name} $active={index === activeFile} $slanted={index === 0 || index === activeFile} onClick={() => setActiveFile(index)}>
            {name}
            {index === activeFile && <Svg w={10} h={10}><path d="M2 2l6 6M8 2L2 8" stroke="#777777" strokeWidth="1.500" /></Svg>}
          </FileTab>
        ))}
      </FileTabs>
      <Canvas><Drawing /></Canvas>
      <LayoutBar>
        <LayoutNav>
          {navPaths.map(item => (
            <button key={item.name} aria-label={item.name}><Svg w={10} h={10}><path d={item.d} fill="#777777" stroke="#777777" /></Svg></button>
          ))}
        </LayoutNav>
        {layouts.map((name, index) => (
          <LayoutTab key={name} $active={index === activeLayout} onClick={() => setActiveLayout(index)}>{name}</LayoutTab>
        ))}
      </LayoutBar>
    </DocumentArea>
  );
};

/* ---------- command line ---------- */

const CommandArea = styled.footer`
  flex-shrink: 0;
  margin-left: 17px;
  border-top: 6px solid #cccccc;
`;

const CommandTitle = styled.div`
  padding-left: 4px;
  line-height: 21px;
  padding-bottom: 4px;
`;

const CommandOutput = styled.div`
  height: 2px;
  background-color: #ffffff;
  border-top: 1px solid #5a5a5a;
`;

const App = () => (
  <AppContainer>
    <GlobalStyle />
    <Header />
    <Ribbon />
    <Workspace>
      <SideStrip>
        <Svg w={12} h={44}>
          <path d="M0 4.500h4M2.500 2v5M5.500 2.500h6v3h-6zM7.500 5v7M9.500 5v7M0 11.500h10.500v4H0M2 13.500h2M6 13.500h2M0 19.500h9.500v9H0M1 27l5-6M4 28l5-6M1 22l3-2M0 33.500h9M2.500 32v10M5.500 34v8M7.500 32v10M0 37.500h9" stroke="#333333" shapeRendering="crispEdges" />
        </Svg>
      </SideStrip>
      <PropertyPanel />
      <Splitter />
      <Documents />
    </Workspace>
    <CommandArea>
      <CommandTitle>命令行</CommandTitle>
      <CommandOutput />
    </CommandArea>
  </AppContainer>
);

export default App;
